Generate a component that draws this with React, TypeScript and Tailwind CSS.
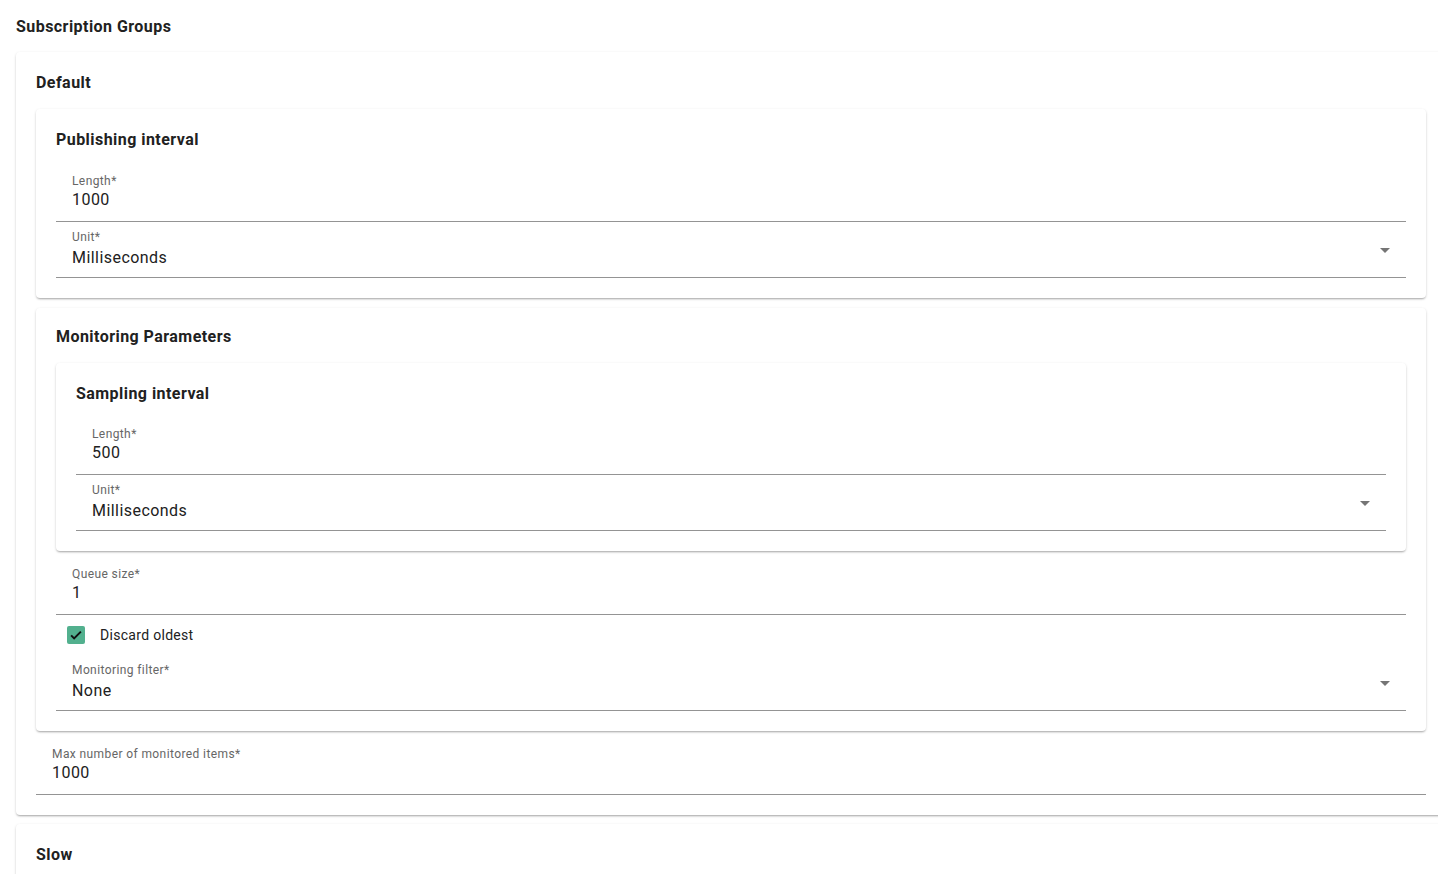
import React from "react";

function TextField({ label, value }: { label: string; value: string }) {
    return (
        <div className="border-b border-[#949494] pt-[7px] pb-[9px] px-4">
            <div className="text-xs leading-4 text-[#666] tracking-[0.4px]">{label}</div>
            <div className="text-base leading-6 -mt-px text-[#212121] tracking-[0.45px]">{value}</div>
        </div>
    );
}

function SelectField({ label, value }: { label: string; value: string }) {
    return (
        <div className="relative border-b border-[#949494] pt-[7px] pb-[7px] px-4">
            <div className="text-xs leading-4 text-[#666] tracking-[0.4px]">{label}</div>
            <div className="text-base leading-6 mt-px text-[#212121] tracking-[0.45px]">{value}</div>
            <svg className="absolute right-[9px] top-4 w-6 h-6" viewBox="0 0 24 24" fill="#757575">
                <path d="M7 10l5 5 5-5z" />
            </svg>
        </div>
    );
}

function Card({ title, children, className = "", head = "pt-[19px]", gap = "mb-[14px]" }: { title: string; children?: React.ReactNode; className?: string; head?: string; gap?: string }) {
    return (
        <div className={`bg-white rounded shadow-[0_2px_2px_-1px_rgba(0,0,0,0.2),0_1px_3px_0_rgba(0,0,0,0.12),0_1px_2px_0_rgba(0,0,0,0.08)] px-5 pb-5 ${head} ${className}`}>
            <h3 className={`text-base leading-6 font-bold text-[#212121] tracking-[0.45px] ${gap}`}>{title}</h3>
            {children}
        </div>
    );
}

function Checkbox({ label }: { label: string }) {
    return (
        <div className="flex items-center h-10 pl-[11px]">
            <span className="w-[18px] h-[18px] rounded-[2px] bg-[#52b08e] flex items-center justify-center">
                <svg viewBox="0 0 24 24" className="w-[18px] h-[18px]" fill="none" stroke="#111" strokeWidth="2.6">
                    <path d="M5.5 12.5l4 4 9-9" />
                </svg>
            </span>
            <span className="ml-[15px] text-sm text-[#212121] tracking-[0.3px]">{label}</span>
        </div>
    );
}

export default function App() {
    return (
        <div className="h-screen overflow-hidden bg-white font-['Roboto',sans-serif]">
            <div className="w-[1446px] pl-4 pt-[15px]">
                <h2 className="text-base leading-6 font-bold text-[#212121] tracking-[0.45px] mb-[13px]">Subscription Groups</h2>
                <Card title="Default" className="mb-[9px]">
                    <Card title="Publishing interval" className="mb-2.5">
                        <TextField label="Length*" value="1000" />
                        <SelectField label="Unit*" value="Milliseconds" />
                    </Card>
                    <Card title="Monitoring Parameters" head="pt-[17px]" gap="mb-[14px]">
                        <Card title="Sampling interval" className="mb-2" head="pt-[19px]" gap="mb-[13px]">
                            <TextField label="Length*" value="500" />
                            <SelectField label="Unit*" value="Milliseconds" />
                        </Card>
                        <TextField label="Queue size*" value="1" />
                        <Checkbox label="Discard oldest" />
                        <SelectField label="Monitoring filter*" value="None" />
                    </Card>
                    <div className="mt-2">
                        <TextField label="Max number of monitored items*" value="1000" />
                    </div>
                </Card>
                <Card title="Slow" />
            </div>
        </div>
    );
}
